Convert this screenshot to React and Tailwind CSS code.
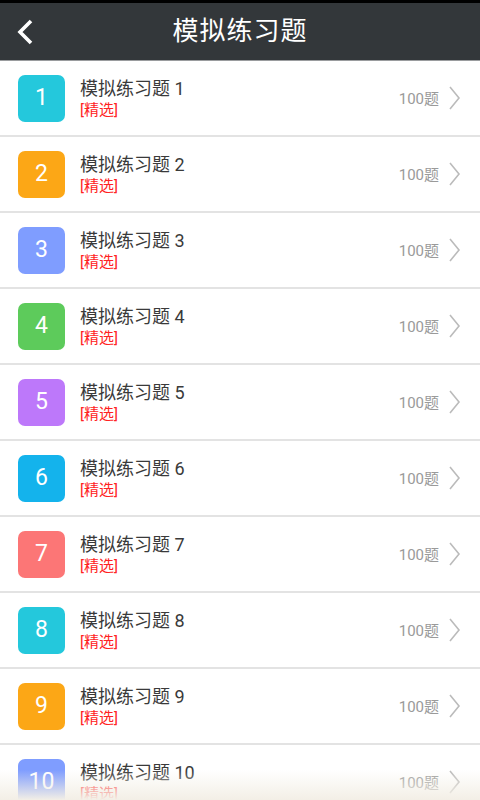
import React from "react";

const items = [
  { n: 1, color: "bg-[#24c8dc]" },
  { n: 2, color: "bg-[#fca716]" },
  { n: 3, color: "bg-[#7f9dff]" },
  { n: 4, color: "bg-[#5dcb5b]" },
  { n: 5, color: "bg-[#bd78fa]" },
  { n: 6, color: "bg-[#14b3ec]" },
  { n: 7, color: "bg-[#fc7676]" },
  { n: 8, color: "bg-[#24c8dc]" },
  { n: 9, color: "bg-[#fca716]" },
  { n: 10, color: "bg-[#7f9dff]" },
];

function Row({ n, color }) {
  return (
    <div className="flex items-center h-[76px] border-b-2 border-[#e3e3e3] bg-white shrink-0">
      {/* number badge */}
      <div
        className={`ml-[18px] w-[47px] h-[47px] rounded-[7px] ${color} flex items-center justify-center text-white text-[23px]`}
      >
        {n}
      </div>
      <div className="ml-[15px] flex flex-col flex-1 mt-[2px]">
        <span className="text-[18px] leading-[22px] text-[#3a3a3a]">模拟练习题 {n}</span>
        <span className="text-[15px] leading-[20px] text-[#f22]">[精选]</span>
      </div>
      <span className="text-[15px] text-[#9a9a9a] mt-[2px]">100题</span>
      <svg width="14" height="26" viewBox="0 0 14 26" className="ml-[9px] mr-[18px]">
        <path d="M2 2 L11 13 L2 24" fill="none" stroke="#bbbbbb" strokeWidth="1.6" />
      </svg>
    </div>
  );
}

export default function App() {
  return (
    <div
      className="relative w-[480px] h-[800px] overflow-hidden bg-white flex flex-col"
      style={{ fontFamily: 'Roboto, "Noto Sans CJK SC", sans-serif' }}
    >
      {/* status strip */}
      <div className="h-[3px] bg-black shrink-0" />

      {/* header */}
      <div className="h-[57px] bg-[#33373a] flex items-center relative shrink-0">
        <svg width="24" height="30" viewBox="0 0 24 30" className="ml-[13px]">
          <path d="M18 4 L7 15 L18 26" fill="none" stroke="#ffffff" strokeWidth="3.6" />
        </svg>
        <div className="absolute inset-0 flex items-center justify-center text-white text-[26px] tracking-[1px] pointer-events-none">
          模拟练习题
        </div>
      </div>
      <div className="h-[1px] bg-[#9a9c9e] shrink-0" />

      {/* list */}
      <div className="flex flex-col">
        {items.map((it) => (
          <Row key={it.n} n={it.n} color={it.color} />
        ))}
      </div>

      {/* overscroll glow */}
      <div className="absolute left-0 right-0 bottom-0 h-[30px] bg-gradient-to-b from-transparent to-[#f3efe6] pointer-events-none" />
    </div>
  );
}
